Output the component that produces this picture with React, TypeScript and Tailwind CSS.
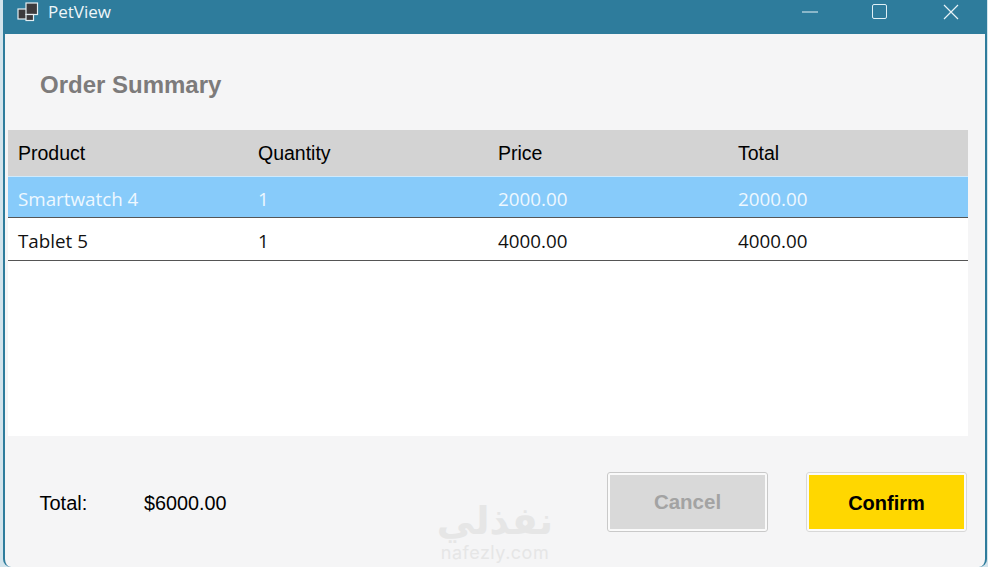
const rows = [
  { product: "Smartwatch 4", qty: "1", price: "2000.00", total: "2000.00", selected: true },
  { product: "Tablet 5", qty: "1", price: "4000.00", total: "4000.00", selected: false },
];

const sans = "font-['Liberation_Sans',Arial,sans-serif]";
const ui = "font-['Open_Sans','Noto_Sans',sans-serif]";

function AppIcon() {
  return (
    <svg width="22" height="20" viewBox="0 0 22 20" className="block">
      <rect x="1" y="7" width="9" height="10" fill="#3c3a3c" stroke="#e4eef2" strokeWidth="1.2" />
      <rect x="9" y="1" width="11.5" height="11.5" fill="#3c3a3c" stroke="#e4eef2" strokeWidth="1.2" />
      <rect x="9" y="12.5" width="7.5" height="6" fill="#3c3a3c" stroke="#e4eef2" strokeWidth="1.2" />
    </svg>
  );
}

export default function App() {
  return (
    <div className="h-[567px] w-[988px] overflow-hidden bg-[#d3e4ec] pl-[3px] pr-px">
      <div className="flex h-[567px] flex-col overflow-hidden rounded-b-[8px] border-x-2 border-[#2e7c9c] bg-[#f5f5f6]">
        <div className="-mx-[2px] flex h-[34px] shrink-0 items-center bg-[#2e7c9c] pb-[11px] text-white">
          <div className="ml-[14px] mr-[9px]">
            <AppIcon />
          </div>
          <span className={`${ui} text-[17px] leading-none text-[#eef6f9]`}>PetView</span>
          <div className="ml-auto flex items-center">
            <svg width="16" height="2" viewBox="0 0 16 2" className="mr-[54px] block">
              <path d="M0 1h16" stroke="#e8f3f7" strokeWidth="1" />
            </svg>
            <div className="mr-[56px] size-[15px] rounded-[2px] border-[1.5px] border-[#dff0f6]" />
            <svg width="16" height="16" viewBox="0 0 16 16" className="mr-[28px] block">
              <path d="M1 1l14 14M15 1L1 15" stroke="#e8f3f7" strokeWidth="1.2" />
            </svg>
          </div>
        </div>

        <h1 className={`${sans} ml-[35px] mt-[37px] h-[59px] text-[24px] font-bold leading-[28px] text-[#7d7b7b]`}>
          Order Summary
        </h1>

        <div className="ml-[3px] mr-[17px] flex h-[306px] flex-col bg-white">
          <div className={`${sans} grid h-[47px] shrink-0 grid-cols-[240px_240px_240px_230px] items-center border-b border-[#cfeafc] bg-[#d3d3d3] pl-[10px] pt-[1px] text-[19.5px] text-black`}>
            <span>Product</span>
            <span>Quantity</span>
            <span>Price</span>
            <span>Total</span>
          </div>
          {rows.map((row) => (
            <div
              key={row.product}
              className={`${ui} grid shrink-0 grid-cols-[240px_240px_240px_230px] items-center border-b border-[#555] pl-[10px] text-[18.8px] ${
                row.selected ? "h-[41px] bg-[#87cbfa] pt-[4px] text-[#eef8ff]" : "h-[43px] bg-white pt-[5px] text-[#111]"
              }`}
            >
              <span>{row.product}</span>
              <span>{row.qty}</span>
              <span>{row.price}</span>
              <span>{row.total}</span>
            </div>
          ))}
        </div>

        <div className="relative flex flex-1 items-start pt-[36px]">
          <span className={`${sans} ml-[34.5px] mt-[21px] w-[104.5px] text-[20px] leading-[20px] text-black`}>Total:</span>
          <span className={`${sans} mt-[21px] text-[19.8px] leading-[20px] text-black`}>$6000.00</span>
          <div className="ml-auto mr-[18px] flex gap-[38px]">
            <button className={`${sans} h-[60px] w-[161px] rounded-[3px] border-[3px] border-[#fafafa] bg-[#d9d9d9] pt-[1px] text-[20.5px] font-bold text-[#a3a3a3] outline outline-1 -outline-offset-1 outline-[#c9c9c9]`}>
              Cancel
            </button>
            <button className={`${sans} h-[60px] w-[161px] rounded-[3px] border-[3px] border-[#fafafa] bg-[#ffd700] pt-[1px] text-[20px] font-bold text-black outline outline-1 -outline-offset-1 outline-[#d8d8d8]`}>
              Confirm
            </button>
          </div>
          <div className="absolute left-[428px] top-[63px] flex w-[124px] flex-col items-center text-[#e6e6e6]">
            <span dir="rtl" className="font-['DejaVu_Sans',sans-serif] text-[38px] font-bold leading-[44px]">نفذلي</span>
            <span className="font-['Inter',sans-serif] text-[18px] leading-[20px] tracking-[0.5px]">nafezly.com</span>
          </div>
        </div>
      </div>
    </div>
  );
}
